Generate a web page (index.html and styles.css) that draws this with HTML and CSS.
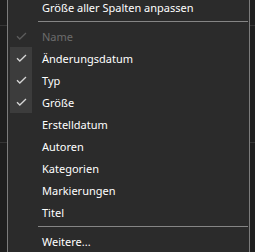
FILE: index.html
```html
<!DOCTYPE html>
<html lang="de">
<head>
    <meta charset="UTF-8">
    <title>Spalten</title>
    <link rel="stylesheet" href="styles.css">
</head>
<body>
    <div class="menu">
        <div class="item"><span class="check"></span><span class="label">Größe aller Spalten anpassen</span></div>
        <div class="sep"></div>
        <div class="item disabled"><span class="check"><svg width="11" height="8" viewBox="0 0 11 8"><path d="M1 4.2 L3.8 7 L10 1" /></svg></span><span class="label">Name</span></div>
        <div class="item checked first"><span class="check"><svg width="11" height="8" viewBox="0 0 11 8"><path d="M1 4.2 L3.8 7 L10 1" /></svg></span><span class="label">Änderungsdatum</span></div>
        <div class="item checked"><span class="check"><svg width="11" height="8" viewBox="0 0 11 8"><path d="M1 4.2 L3.8 7 L10 1" /></svg></span><span class="label">Typ</span></div>
        <div class="item checked"><span class="check"><svg width="11" height="8" viewBox="0 0 11 8"><path d="M1 4.2 L3.8 7 L10 1" /></svg></span><span class="label">Größe</span></div>
        <div class="item"><span class="check"></span><span class="label">Erstelldatum</span></div>
        <div class="item"><span class="check"></span><span class="label">Autoren</span></div>
        <div class="item"><span class="check"></span><span class="label">Kategorien</span></div>
        <div class="item"><span class="check"></span><span class="label">Markierungen</span></div>
        <div class="item"><span class="check"></span><span class="label">Titel</span></div>
        <div class="sep"></div>
        <div class="item"><span class="check"></span><span class="label">Weitere...</span></div>
    </div>
</body>
</html>
```

FILE: styles.css
```css
html, body {
    margin: 0;
    padding: 0;
    height: 252px;
    overflow: hidden;
}
body {
    background-color: #1f1f1f;
    background-image:
        linear-gradient(#363636, #363636),
        linear-gradient(#363636, #363636);
    background-size: 100% 1px, 100% 1px;
    background-position: 0 25px, 0 142px;
    background-repeat: no-repeat;
    font-family: "Noto Sans", sans-serif;
    font-size: 11px;
}
.menu {
    width: 239px;
    margin: -4px 0 0 7px;
    background: #2b2b2b;
    border-left: 1px solid #7c7c7c;
    border-right: 1px solid #7c7c7c;
    padding: 0 0 10px 2px;
    box-sizing: content-box;
}
.item {
    display: flex;
    align-items: center;
    height: 22px;
    color: #ffffff;
}
.check {
    width: 22px;
    height: 22px;
    display: flex;
    align-items: center;
    justify-content: center;
    flex-shrink: 0;
}
.check svg path {
    fill: none;
    stroke: #d6d6d6;
    stroke-width: 1.3;
}
.item.checked .check {
    background: #3c3c3c;
}
.label {
    margin-left: 10px;
    white-space: nowrap;
}
.item.disabled {
    color: #6b6b6b;
}
.item.disabled .check svg path {
    stroke: #5c5c5c;
}
.sep {
    height: 1px;
    background: #858585;
    margin: 3px 1px 3px 28px;
}
```
